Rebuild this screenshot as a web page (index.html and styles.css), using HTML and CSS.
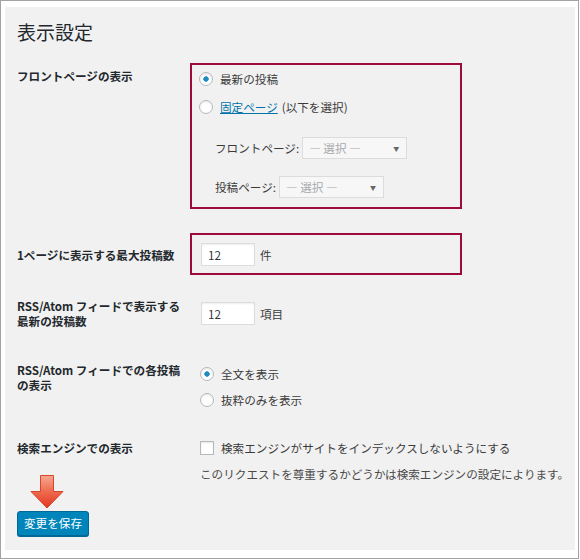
FILE: index.html
```html
<!DOCTYPE html>
<html lang="ja">
<head>
<meta charset="utf-8">
<title>表示設定</title>
<link rel="stylesheet" href="styles.css">
</head>
<body>
<div class="frame">
  <div class="panel">
    <h1 class="title">表示設定</h1>

    <div class="row r1">
      <div class="label">フロントページの表示</div>
      <div class="field mark f1">
        <label class="opt"><input type="radio" class="radio" name="front" checked>最新の投稿</label>
        <label class="opt opt2"><input type="radio" class="radio" name="front"><a class="link" href="#">固定ページ</a><span class="paren">(以下を選択)</span></label>
        <div class="sub s1"><span>フロントページ:</span><div class="select"><span>— 選択 —</span><span class="caret">▼</span></div></div>
        <div class="sub s2"><span>投稿ページ:</span><div class="select"><span>— 選択 —</span><span class="caret">▼</span></div></div>
      </div>
    </div>

    <div class="row r2">
      <div class="label">1ページに表示する最大投稿数</div>
      <div class="field mark f2">
        <div class="num"><input class="text" type="text" value="12"><span class="unit">件</span></div>
      </div>
    </div>

    <div class="row r3">
      <div class="label">RSS/Atom フィードで表示する<br>最新の投稿数</div>
      <div class="field f2">
        <div class="num"><input class="text" type="text" value="12"><span class="unit">項目</span></div>
      </div>
    </div>

    <div class="row r4">
      <div class="label">RSS/Atom フィードでの各投稿<br>の表示</div>
      <div class="field f4">
        <label class="opt"><input type="radio" class="radio" name="feed" checked>全文を表示</label>
        <label class="opt opt-b"><input type="radio" class="radio" name="feed">抜粋のみを表示</label>
      </div>
    </div>

    <div class="row r5">
      <div class="label">検索エンジンでの表示</div>
      <div class="field f4">
        <label class="opt"><input type="checkbox" class="check">検索エンジンがサイトをインデックスしないようにする</label>
        <p class="desc">このリクエストを尊重するかどうかは検索エンジンの設定によります。</p>
      </div>
    </div>

    <div class="submit">
      <svg class="arrow" width="34" height="34" viewBox="0 0 34 34" aria-hidden="true">
        <defs>
          <linearGradient id="ag" x1="0" y1="0" x2="0" y2="1">
            <stop offset="0" stop-color="#f6a891"/>
            <stop offset="0.5" stop-color="#ee6a4e"/>
            <stop offset="1" stop-color="#e2361f"/>
          </linearGradient>
        </defs>
        <path d="M10.5 0.5 H23.5 V16.5 H33 L17 33 L1 16.5 H10.5 Z" fill="url(#ag)" stroke="#d9442c" stroke-width="1"/>
      </svg>
      <button class="button" type="button">変更を保存</button>
    </div>
  </div>
</div>
</body>
</html>
```

FILE: styles.css
```css
* { box-sizing: border-box; }
html, body { margin: 0; padding: 0; background: #fff; }
body {
  font-family: "Noto Sans CJK JP", "Noto Sans", sans-serif;
  font-size: 11.6px;
  color: #3a3a3a;
}
.frame {
  width: 579px;
  height: 559px;
  border: 1px solid #a3a3a3;
  padding: 6px 0 0 4px;
}
.panel {
  width: 570px;
  height: 543px;
  background: #f1f1f1;
  padding: 0 0 0 12px;
  overflow: hidden;
}
.title {
  margin: 0;
  padding-top: 13px;
  font-size: 19px;
  line-height: 24px;
  font-weight: normal;
  color: #23282d;
}
.row {
  display: flex;
  align-items: flex-start;
}
.label {
  width: 173px;
  flex: none;
  font-weight: bold;
  color: #23282d;
  line-height: 15px;
}
.field {
  border: 2px solid transparent;
  padding-left: 7px;
}
.field.mark { border-color: #9d0b3c; width: 272px; }

.r1 { margin-top: 19px; }
.r1 .label { padding-top: 6px; }
.f1 { padding-top: 4px; padding-bottom: 9px; }

.opt {
  display: flex;
  align-items: center;
  height: 20px;
  white-space: nowrap;
}
.opt2 { margin-top: 8px; }
.opt-b { margin-top: 6px; }
.radio, .check {
  -webkit-appearance: none;
  appearance: none;
  width: 14px;
  height: 14px;
  margin: 0 7px 0 0;
  border: 1px solid #b4b9be;
  background: #fff;
  box-shadow: inset 0 1px 2px rgba(0,0,0,0.1);
  flex: none;
}
.radio { border-radius: 50%; }
.radio:checked {
  background: radial-gradient(circle at center, #1e8cbe 0 2.4px, #fff 3px);
}
.check { border-radius: 0; }
.link { color: #0073aa; text-decoration: underline; }
.paren { margin-left: 4px; }

.sub {
  display: flex;
  align-items: center;
  padding-left: 16px;
  height: 22px;
}
.s1 { margin-top: 20px; }
.s2 { margin-top: 17px; }
.select {
  margin-left: 3px;
  width: 105px;
  height: 22px;
  border: 1px solid #dcdcdc;
  background: #f7f7f7;
  display: flex;
  align-items: center;
  justify-content: space-between;
  padding: 0 7px 0 6px;
  color: #a7aaad;
}
.caret { font-size: 6px; color: #666; }

.r2 { margin-top: 24px; }
.r2 .label { padding-top: 15px; }
.f2 { padding: 8px 0 7px 9px; }
.num { display: flex; align-items: center; height: 23px; }
.text {
  width: 54px;
  height: 23px;
  margin: 0;
  border: 1px solid #dddddd;
  background: #fff;
  box-shadow: inset 0 1px 2px rgba(0,0,0,0.07);
  padding: 0 0 0 6px;
  font-family: "Noto Sans CJK JP", "Noto Sans", sans-serif;
  font-size: 11.6px;
  color: #32373c;
}
.unit { margin-left: 5px; }

.r3 { margin-top: 17px; }
.r3 .label { padding-top: 7px; }

.r4 { margin-top: 26px; }
.r4 .label { padding-top: 3px; }
.f4 { padding: 2px 0 0 8px; }

.r5 { margin-top: 24px; }
.r5 .label { padding-top: 5px; }
.r5 .f4 { padding-top: 0; }
.desc {
  margin: 8px 0 0 0;
  line-height: 16px;
  color: #4a4a4a;
  white-space: nowrap;
}

.submit {
  position: relative;
  margin-top: 27px;
}
.arrow {
  position: absolute;
  left: 13px;
  top: -36px;
}
.button {
  display: block;
  width: 72px;
  height: 25px;
  margin: 0;
  padding: 0;
  border: 1px solid #006799;
  border-radius: 3px;
  background: #0085ba;
  box-shadow: 0 1px 0 #006799;
  color: #fff;
  font-family: "Noto Sans CJK JP", "Noto Sans", sans-serif;
  font-size: 11.6px;
  line-height: 23px;
  text-align: center;
}
```
